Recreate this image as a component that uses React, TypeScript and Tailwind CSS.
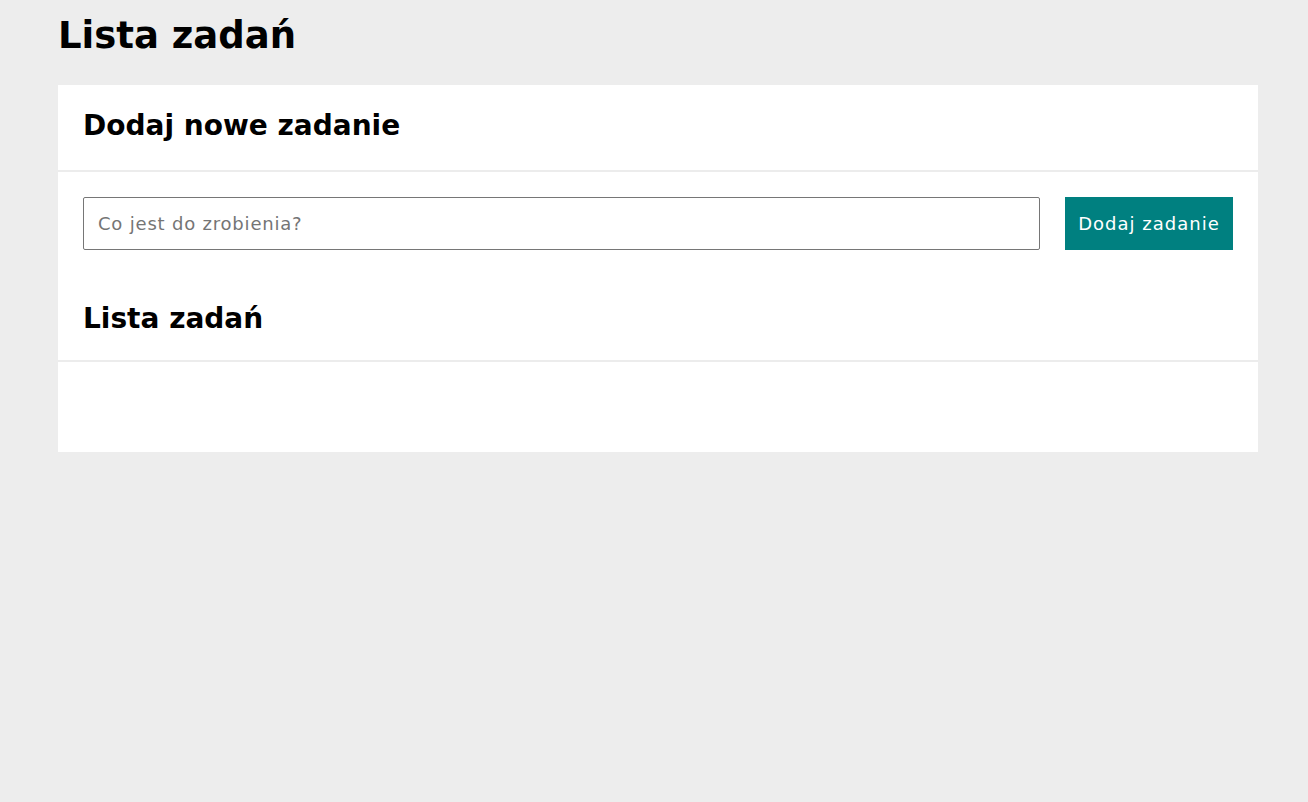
import { useState } from "react";

const font = "font-['DejaVu_Sans',sans-serif]";

const App = () => {
    const [task, setTask] = useState("");
    const [tasks, setTasks] = useState<string[]>([]);

    const addTask = () => {
        if (!task.trim()) return;
        setTasks([...tasks, task.trim()]);
        setTask("");
    };

    return (
        <div className={`min-h-[802px] bg-[#ededed] pt-[14px] text-black ${font}`}>
            {/* page title */}
            <h1 className="ml-[58px] mb-[28px] text-[37px] leading-[43px] font-bold">Lista zadań</h1>

            <div className="ml-[58px] w-[1200px] bg-white">
                {/* add task */}
                <div className="px-[25px] pt-[23px] pb-[27px] border-b-2 border-[#ececec]">
                    <h2 className="text-[28px] leading-[35px] font-bold">Dodaj nowe zadanie</h2>
                </div>
                <div className="px-[25px] pt-[25px] pb-[24px]">
                    <div className="flex items-center gap-[25px]">
                        <input
                            value={task}
                            onChange={(e) => setTask(e.target.value)}
                            placeholder="Co jest do zrobienia?"
                            className="flex-1 h-[53px] px-[14px] border border-[#767676] rounded-[2px] text-[18px] tracking-[0.8px] placeholder:text-[#757575] outline-none"
                        />
                        <button
                            onClick={addTask}
                            className="h-[53px] w-[168px] bg-[#008080] text-white text-[18px] tracking-[1px]"
                        >
                            Dodaj zadanie
                        </button>
                    </div>
                    <h2 className="mt-[51px] text-[28px] leading-[35px] font-bold">Lista zadań</h2>
                </div>

                {/* list */}
                <div className="border-t-2 border-[#ececec] h-[92px] px-[25px]">
                    {tasks.map((t, i) => (
                        <div key={i} className="py-2 text-[18px]">{t}</div>
                    ))}
                </div>
            </div>
        </div>
    );
};

export default App;
